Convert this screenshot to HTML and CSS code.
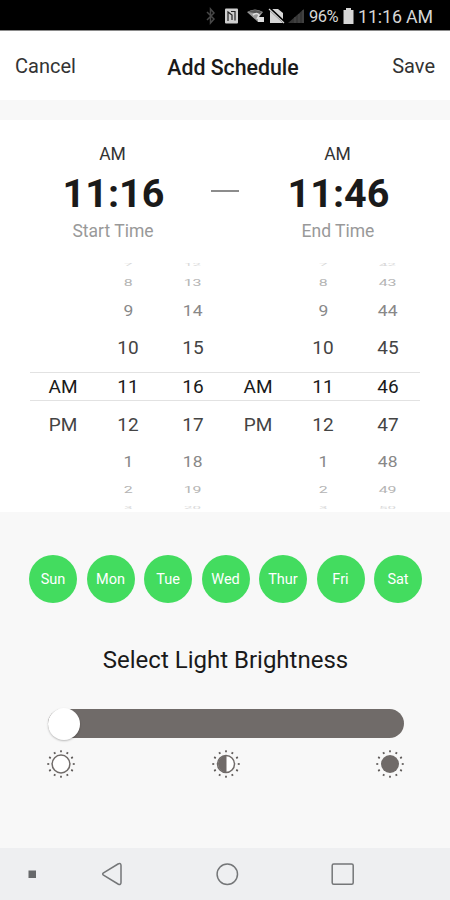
FILE: index.html
```
<!DOCTYPE html>
<html lang="en">
<head>
    <meta charset="UTF-8">
    <meta name="viewport" content="width=device-width, initial-scale=1.0">
    <title>Add Schedule</title>
    <link rel="stylesheet" href="styles.css">
</head>
<body>
    <!-- status bar -->
    <div class="status-bar">
        <svg class="status-icons" width="102" height="18" viewBox="0 0 102 18">
            <path d="M3 5l7 7-3.500 4V2l3.500 4-7 7" fill="none" stroke="#484848" stroke-width="1.500"/>
            <path d="M22 1.500h11q1 0 1 1v13q0 1-1 1H22q-1 0-1-1v-13q0-1 1-1z" fill="#cfcfcf"/>
            <path d="M24 14V5l4 3v5M27 4.500h4v9" fill="none" stroke="#222" stroke-width="1.200"/>
            <path d="M43 5q8-5 16 0l-4 5-1 5z" fill="#999"/>
            <path d="M44 5q7-4 14 0l-3 2-5-1z" fill="#555"/>
            <path d="M49 8q4-3 6 0l-2 4" fill="none" stroke="#ddd" stroke-width="1.600"/>
            <path d="M54 10h6v5h-6z" fill="#ddd"/>
            <path d="M67 2h7l5 4v10H66V3z" fill="#d6d6d6"/>
            <path d="M65 1l15 14" stroke="#000" stroke-width="3"/>
            <path d="M65 2l15 14" stroke="#d6d6d6" stroke-width="1.200"/>
            <path d="M84 16L100 2v14z" fill="#353535"/>
            <path d="M91 10v6M95 7v9M99 3v13" stroke="#4c4c4c" stroke-width="1"/>
        </svg>
        <span class="battery-level">96%</span>
        <svg class="battery" width="11" height="16" viewBox="0 0 11 16">
            <path d="M3 0h5v2h2.500v14H.500V2H3z" fill="#d6d6d6"/>
        </svg>
        <span class="clock">11:16 AM</span>
    </div>

    <div class="header">
        <span class="header-btn">Cancel</span>
        <span class="header-title">Add Schedule</span>
        <span class="header-btn save">Save</span>
    </div>

    <!-- start / end time -->
    <div class="time-section">
        <div class="time-summary">
            <div class="time-box">
                <div class="time-period">AM</div>
                <div class="time-value">11:16</div>
                <div class="time-label">Start Time</div>
            </div>
            <div class="time-dash"></div>
            <div class="time-box">
                <div class="time-period">AM</div>
                <div class="time-value">11:46</div>
                <div class="time-label">End Time</div>
            </div>
        </div>

        <!-- wheel picker, rows get flatter away from the selected one -->
        <div class="picker">
            <div class="picker-row edge"><span></span><span>7</span><span>12</span><span></span><span>7</span><span>42</span></div>
            <div class="picker-row far"><span></span><span>8</span><span>13</span><span></span><span>8</span><span>43</span></div>
            <div class="picker-row mid"><span></span><span>9</span><span>14</span><span></span><span>9</span><span>44</span></div>
            <div class="picker-row near"><span></span><span>10</span><span>15</span><span></span><span>10</span><span>45</span></div>
            <div class="picker-row selected"><span>AM</span><span>11</span><span>16</span><span>AM</span><span>11</span><span>46</span></div>
            <div class="picker-row near"><span>PM</span><span>12</span><span>17</span><span>PM</span><span>12</span><span>47</span></div>
            <div class="picker-row mid"><span></span><span>1</span><span>18</span><span></span><span>1</span><span>48</span></div>
            <div class="picker-row far"><span></span><span>2</span><span>19</span><span></span><span>2</span><span>49</span></div>
            <div class="picker-row edge"><span></span><span>3</span><span>20</span><span></span><span>3</span><span>50</span></div>
        </div>
    </div>

    <div class="settings">
        <div class="days">
            <div class="day">Sun</div>
            <div class="day">Mon</div>
            <div class="day">Tue</div>
            <div class="day">Wed</div>
            <div class="day">Thur</div>
            <div class="day">Fri</div>
            <div class="day">Sat</div>
        </div>

        <div class="brightness-title">Select Light Brightness</div>
        <div class="slider">
            <div class="slider-thumb"></div>
        </div>
        <div class="brightness-icons">
            <svg width="28" height="28" viewBox="0 0 28 28">
                <circle class="rays" cx="14" cy="14" r="12.700" pathLength="120"/>
                <circle class="ring" cx="14" cy="14" r="8.900"/>
            </svg>
            <svg width="28" height="28" viewBox="0 0 28 28">
                <circle class="rays" cx="14" cy="14" r="12.700" pathLength="120"/>
                <circle class="ring" cx="14" cy="14" r="8.500"/>
                <path class="fill" d="M14.500 5.500a8.500 8.500 0 0 0 0 17z"/>
            </svg>
            <svg width="28" height="28" viewBox="0 0 28 28">
                <circle class="rays" cx="14" cy="14" r="12.700" pathLength="120"/>
                <circle class="fill" cx="14" cy="14" r="9"/>
            </svg>
        </div>
    </div>

    <!-- system navigation -->
    <div class="nav-bar">
        <svg width="450" height="52" viewBox="0 0 450 52">
            <rect x="28.500" y="22.500" width="7.500" height="7.500" fill="#66686a"/>
            <g fill="none" stroke="#747678" stroke-width="1.500">
                <path d="M103.500 24.800L118 16q3-1.500 3 1.500v17q0 3-3 1.500l-14.500-8.800q-1.600-1.200 0-2.400z"/>
                <circle cx="227.300" cy="26.200" r="10.200"/>
                <rect x="332.200" y="16" width="21" height="20.300" rx="1.500"/>
            </g>
        </svg>
    </div>
</body>
</html>
```
FILE: styles.css
```
* {
    box-sizing: border-box;
}

body {
    margin: 0;
    width: 450px;
    height: 900px;
    display: flex;
    flex-direction: column;
    overflow: hidden;
    background-color: #f8f8f8;
    color: #1a1a1a;
    font-family: Roboto, "Liberation Sans", sans-serif;
}

/* status bar */
.status-bar {
    display: flex;
    align-items: center;
    height: 31px;
    padding: 2px 0 0 204px;
    background-color: #000;
    border-bottom: 1px solid #8a8a8a;
    color: #d6d6d6;
    white-space: nowrap;
}

.battery-level {
    width: 32px;
    margin-left: 3px;
    font-size: 16.5px;
    letter-spacing: -0.5px;
}

.battery {
    margin: 0 4px 0 2px;
}

.clock {
    font-size: 17.8px;
    letter-spacing: -0.1px;
}

/* header */
.header {
    display: grid;
    grid-template-columns: 100px 1fr 100px;
    align-items: center;
    height: 69px;
    padding: 1px 15px 0;
    background-color: #fff;
    text-align: center;
}

.header-btn {
    font-size: 20px;
    text-align: left;
    color: #333;
}

.header-btn.save {
    text-align: right;
}

.header-title {
    margin-left: 6px;
    margin-right: -10px;
    padding-top: 2px;
    font-size: 21.3px;
    font-weight: 500;
}

/* start / end time */
.time-section {
    height: 392px;
    margin-top: 20px;
    background-color: #fff;
}

.time-summary {
    display: flex;
    justify-content: center;
    height: 142px;
    padding-top: 23px;
}

.time-box {
    width: 197px;
    text-align: center;
}

.time-period {
    font-size: 17.5px;
    line-height: 22px;
    color: #333;
}

.time-value {
    margin: 5px 0 0 2px;
    font-size: 39.5px;
    font-weight: 700;
    line-height: 48px;
}

.time-label {
    margin: 2px 0 0 1px;
    font-size: 17.5px;
    line-height: 22px;
    color: #999;
}

.time-dash {
    width: 28px;
    height: 2px;
    margin-top: 47px;
    background-color: #8c8c8c;
}

/* wheel picker */
.picker {
    height: 250px;
    padding: 0 30px;
    overflow: hidden;
}

.picker-row {
    display: grid;
    grid-template-columns: repeat(6, 65px);
    grid-template-rows: 100%;
    align-items: center;
    justify-items: center;
    font-size: 19px;
    line-height: 24px;
}

.picker-row span {
    padding-left: 1px;
}

.picker-row.selected {
    height: 29px;
    border-top: 1px solid #e2e2e2;
    border-bottom: 1px solid #e2e2e2;
}

.picker-row.near {
    height: 48px;
    color: #444;
}

.picker-row.near span {
    transform: scaleY(0.96);
}

.picker-row.mid {
    height: 26px;
    color: #888;
}

.picker-row.mid span {
    transform: scale(0.92, 0.76);
}

.picker-row.far {
    height: 30px;
    color: #b4b4b4;
}

.picker-row.far span {
    transform: scale(0.84, 0.46);
}

.picker-row.edge {
    height: 6px;
    line-height: 6px;
    color: #d8d8d8;
}

.picker-row.edge span {
    transform: scale(0.8, 0.2);
}

/* days and brightness */
.settings {
    height: 336px;
    padding-top: 43px;
}

.days {
    display: flex;
    justify-content: space-between;
    padding: 0 28px 0 29px;
}

.day {
    width: 48px;
    height: 48px;
    border-radius: 50%;
    background-color: #43dc5f;
    color: #fff;
    font-size: 14.5px;
    line-height: 50px;
    text-align: center;
}

.brightness-title {
    margin: 42px 0 0 1px;
    font-size: 24px;
    line-height: 30px;
    text-align: center;
}

.slider {
    width: 356px;
    height: 29px;
    margin: 34px 0 0 48px;
    border-radius: 15px;
    background-color: #706b69;
}

.slider-thumb {
    position: relative;
    top: -1px;
    width: 32px;
    height: 32px;
    border-radius: 50%;
    background-color: #fff;
    box-shadow: 0 1px 2px rgba(0, 0, 0, 0.25);
}

.brightness-icons {
    display: flex;
    justify-content: space-between;
    margin: 12px 46px 0 47px;
}

.rays {
    fill: none;
    stroke: #5f5b59;
    stroke-width: 1.9;
    stroke-dasharray: 2.8 7.2;
    stroke-dashoffset: 1.4;
}

.ring {
    fill: #fff;
    stroke: #706b69;
    stroke-width: 1.5;
}

.fill {
    fill: #706b69;
}

/* system navigation */
.nav-bar {
    height: 52px;
    background-color: #eeeff1;
}
```
